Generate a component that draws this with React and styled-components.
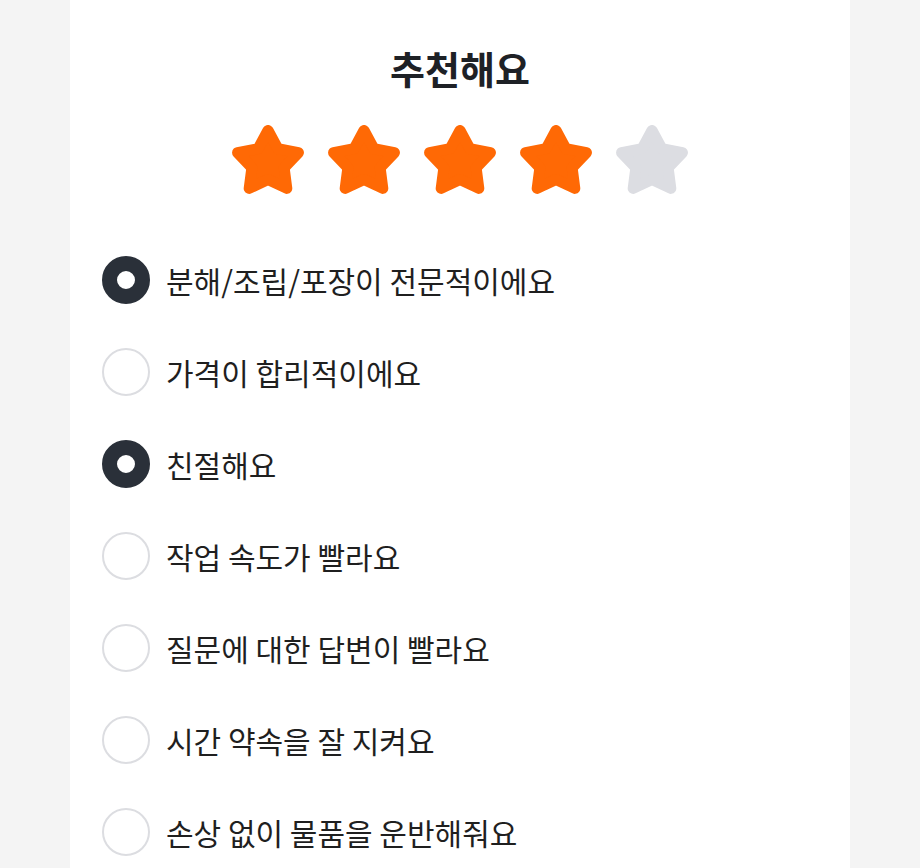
import React, { useState } from 'react';
import styled, { createGlobalStyle } from 'styled-components';

const GlobalStyle = createGlobalStyle`
  html, body {
    margin: 0;
    padding: 0;
    background: #f4f4f4;
    font-family: 'Noto Sans CJK KR', 'Noto Sans', sans-serif;
  }
`;

const Page = styled.div`
  display: flex;
  justify-content: center;
  min-height: 868px;
`;

const Panel = styled.div`
  width: 780px;
  background: #ffffff;
  display: flex;
  flex-direction: column;
  padding: 45px 32px 0;
  box-sizing: border-box;
`;

const Title = styled.h1`
  margin: 0;
  text-align: center;
  font-size: 38px;
  line-height: 46px;
  font-weight: 700;
  color: #1e2126;
`;

const StarRow = styled.div`
  display: flex;
  justify-content: center;
  gap: 24px;
  margin-top: 34px;
`;

const StarButton = styled.button`
  width: 72px;
  height: 70px;
  padding: 0;
  border: none;
  background: none;
  cursor: pointer;
  display: flex;
`;

const OptionList = styled.ul`
  list-style: none;
  margin: 39px 0 0;
  padding: 0;
`;

const OptionRow = styled.li`
  height: 92px;
  display: flex;
  align-items: center;
  gap: 16px;
  cursor: pointer;
`;

const Radio = styled.span`
  width: 48px;
  height: 48px;
  box-sizing: border-box;
  border-radius: 50%;
  flex-shrink: 0;
  border: ${p => (p.$checked ? '15px solid #2a3039' : '2px solid #dcdde1')};
  background: #fff;
`;

const Label = styled.span`
  font-size: 30px;
  color: #1f1f1f;
`;

// rounded five-point star, corners softened by a round stroke join
const STAR_POINTS =
  '36,5.5 45.97,23.78 66.44,27.61 52.13,42.74 54.81,63.39 36,54.46 17.19,63.39 19.87,42.74 5.56,27.61 26.03,23.78';

const Star = ({ filled }) => {
  const color = filled ? '#ff6905' : '#dcdde2';
  return (
    <svg width="72" height="70" viewBox="0 0 72 70">
      <polygon points={STAR_POINTS} fill={color} stroke={color} strokeWidth="11" strokeLinejoin="round" />
    </svg>
  );
};

const OPTIONS = [
  '분해/조립/포장이 전문적이에요',
  '가격이 합리적이에요',
  '친절해요',
  '작업 속도가 빨라요',
  '질문에 대한 답변이 빨라요',
  '시간 약속을 잘 지켜요',
  '손상 없이 물품을 운반해줘요',
];

export default function App() {
  const [rating, setRating] = useState(4);
  const [checked, setChecked] = useState([0, 2]);

  const toggle = (i) => {
    setChecked(prev => (prev.includes(i) ? prev.filter(x => x !== i) : [...prev, i]));
  };

  return (
    <>
      <GlobalStyle />
      <Page>
        <Panel>
          <Title>추천해요</Title>
          <StarRow>
            {[1, 2, 3, 4, 5].map(n => (
              <StarButton key={n} onClick={() => setRating(n)}>
                <Star filled={n <= rating} />
              </StarButton>
            ))}
          </StarRow>
          <OptionList>
            {OPTIONS.map((text, i) => (
              <OptionRow key={text} onClick={() => toggle(i)}>
                <Radio $checked={checked.includes(i)} />
                <Label>{text}</Label>
              </OptionRow>
            ))}
          </OptionList>
        </Panel>
      </Page>
    </>
  );
}
